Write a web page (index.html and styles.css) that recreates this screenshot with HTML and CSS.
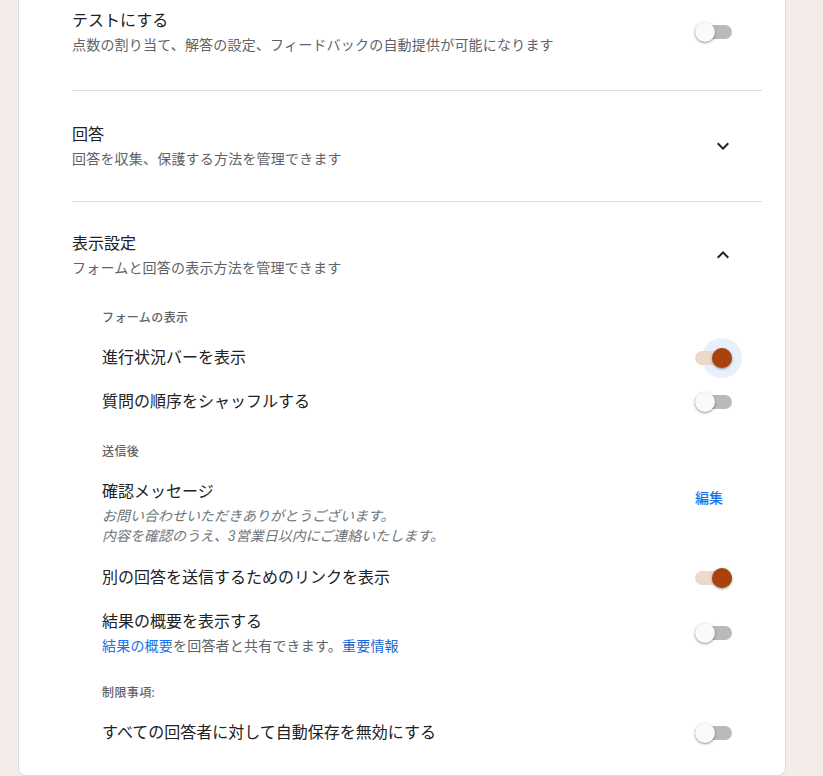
FILE: index.html
```html
<!DOCTYPE html>
<html lang="ja">
<head>
<meta charset="utf-8">
<title>設定</title>
<link rel="stylesheet" href="styles.css">
</head>
<body>
<div class="card">
  <section class="section section-first">
    <div class="header">
      <div class="head-text">
        <div class="title">テストにする</div>
        <div class="subtitle">点数の割り当て、解答の設定、フィードバックの自動提供が可能になります</div>
      </div>
      <div class="switch"><span class="track"></span><span class="thumb"></span></div>
    </div>
  </section>

  <section class="section section-mid">
    <div class="header">
      <div class="head-text">
        <div class="title">回答</div>
        <div class="subtitle">回答を収集、保護する方法を管理できます</div>
      </div>
      <svg class="chevron" viewBox="0 0 24 24" width="24" height="24"><path d="M7.41 8.59L12 13.17l4.59-4.58L18 10l-6 6-6-6 1.41-1.41z"/></svg>
    </div>
  </section>

  <section class="section section-last">
    <div class="header">
      <div class="head-text">
        <div class="title">表示設定</div>
        <div class="subtitle">フォームと回答の表示方法を管理できます</div>
      </div>
      <svg class="chevron" viewBox="0 0 24 24" width="24" height="24"><path d="M7.41 15.41L12 10.83l4.59 4.58L18 14l-6-6-6 6z"/></svg>
    </div>

    <div class="group group-1">
      <div class="group-label">フォームの表示</div>
      <div class="row">
        <div class="row-title">進行状況バーを表示</div>
        <div class="switch on"><span class="halo"></span><span class="track"></span><span class="thumb"></span></div>
      </div>
      <div class="row">
        <div class="row-title">質問の順序をシャッフルする</div>
        <div class="switch"><span class="track"></span><span class="thumb"></span></div>
      </div>
    </div>

    <div class="group group-2">
      <div class="group-label">送信後</div>
      <div class="row row-top">
        <div class="row-text">
          <div class="row-title">確認メッセージ</div>
          <div class="message">お問い合わせいただきありがとうございます。<br>内容を確認のうえ、3営業日以内にご連絡いたします。</div>
        </div>
        <span class="edit">編集</span>
      </div>
      <div class="row">
        <div class="row-title">別の回答を送信するためのリンクを表示</div>
        <div class="switch on"><span class="track"></span><span class="thumb"></span></div>
      </div>
      <div class="row">
        <div class="row-text">
          <div class="row-title">結果の概要を表示する</div>
          <div class="row-sub"><span class="link">結果の概要</span>を回答者と共有できます。<span class="link link-dark">重要情報</span></div>
        </div>
        <div class="switch"><span class="track"></span><span class="thumb"></span></div>
      </div>
    </div>

    <div class="group group-3">
      <div class="group-label">制限事項:</div>
      <div class="row">
        <div class="row-title">すべての回答者に対して自動保存を無効にする</div>
        <div class="switch"><span class="track"></span><span class="thumb"></span></div>
      </div>
    </div>
  </section>
</div>
</body>
</html>
```

FILE: styles.css
```css
html {
  background: #f4ece8;
}
body {
  margin: 0;
  font-family: Roboto, "Noto Sans CJK JP", sans-serif;
  color: #202124;
}
.card {
  margin-left: 18px;
  width: 768px;
  box-sizing: border-box;
  background: #fff;
  border: 1px solid #dadce0;
  border-top: none;
  border-radius: 0 0 8px 8px;
  padding: 0 23px 20px 53px;
}
.section {
  border-bottom: 1px solid #dadce0;
}
.section-first {
  padding: 9px 0 35px;
}
.section-mid {
  padding: 32px 0 32px;
}
.section-last {
  padding: 30px 0 0;
  border-bottom: none;
}
.header {
  display: flex;
  align-items: center;
  justify-content: space-between;
}
.title {
  font-size: 16px;
  line-height: 24px;
  color: #202124;
}
.subtitle {
  margin-top: 2px;
  font-size: 14px;
  line-height: 20px;
  letter-spacing: .2px;
  color: #5f6368;
}
.chevron {
  display: block;
  margin-right: 27px;
  fill: #202124;
}
.group {
  padding-left: 30px;
}
.group-1 { margin-top: 32px; }
.group-2 { margin-top: 20px; }
.group-3 { margin-top: 19px; }
.group-label {
  font-size: 12px;
  line-height: 16px;
  font-weight: 500;
  letter-spacing: .4px;
  color: #5f6368;
  margin-bottom: 10px;
}
.row {
  display: flex;
  align-items: center;
  justify-content: space-between;
  padding: 10px 0;
}
.row-top {
  align-items: flex-start;
}
.row-title {
  font-size: 16px;
  line-height: 24px;
  color: #202124;
}
.message {
  margin-top: 2px;
  font-size: 14px;
  line-height: 20px;
  font-style: italic;
  color: #70757a;
}
.row-sub {
  margin-top: 2px;
  font-size: 14px;
  line-height: 20px;
  letter-spacing: .2px;
  color: #5f6368;
}
.link {
  color: #1a73e8;
}
.link-dark {
  color: #1967d2;
}
.edit {
  margin-top: 8px;
  margin-right: 39px;
  font-size: 14px;
  line-height: 20px;
  font-weight: 500;
  color: #1a73e8;
}
.switch {
  position: relative;
  flex: none;
  width: 37px;
  height: 14px;
  margin-right: 30px;
}
.switch .track {
  position: absolute;
  inset: 0;
  border-radius: 7px;
  background: #bababa;
}
.switch .thumb {
  position: absolute;
  left: 0;
  top: -3px;
  width: 20px;
  height: 20px;
  border-radius: 50%;
  background: #fafafa;
  box-shadow: 0 1px 3px rgba(0,0,0,.35), 0 1px 1px rgba(0,0,0,.12);
}
.switch.on .track {
  background: #edd8cc;
}
.switch.on .thumb {
  left: auto;
  right: 0;
  background: #a9420c;
}
.switch .halo {
  position: absolute;
  right: -10px;
  top: -13px;
  width: 40px;
  height: 40px;
  border-radius: 50%;
  background: #e8f0fe;
}
```
